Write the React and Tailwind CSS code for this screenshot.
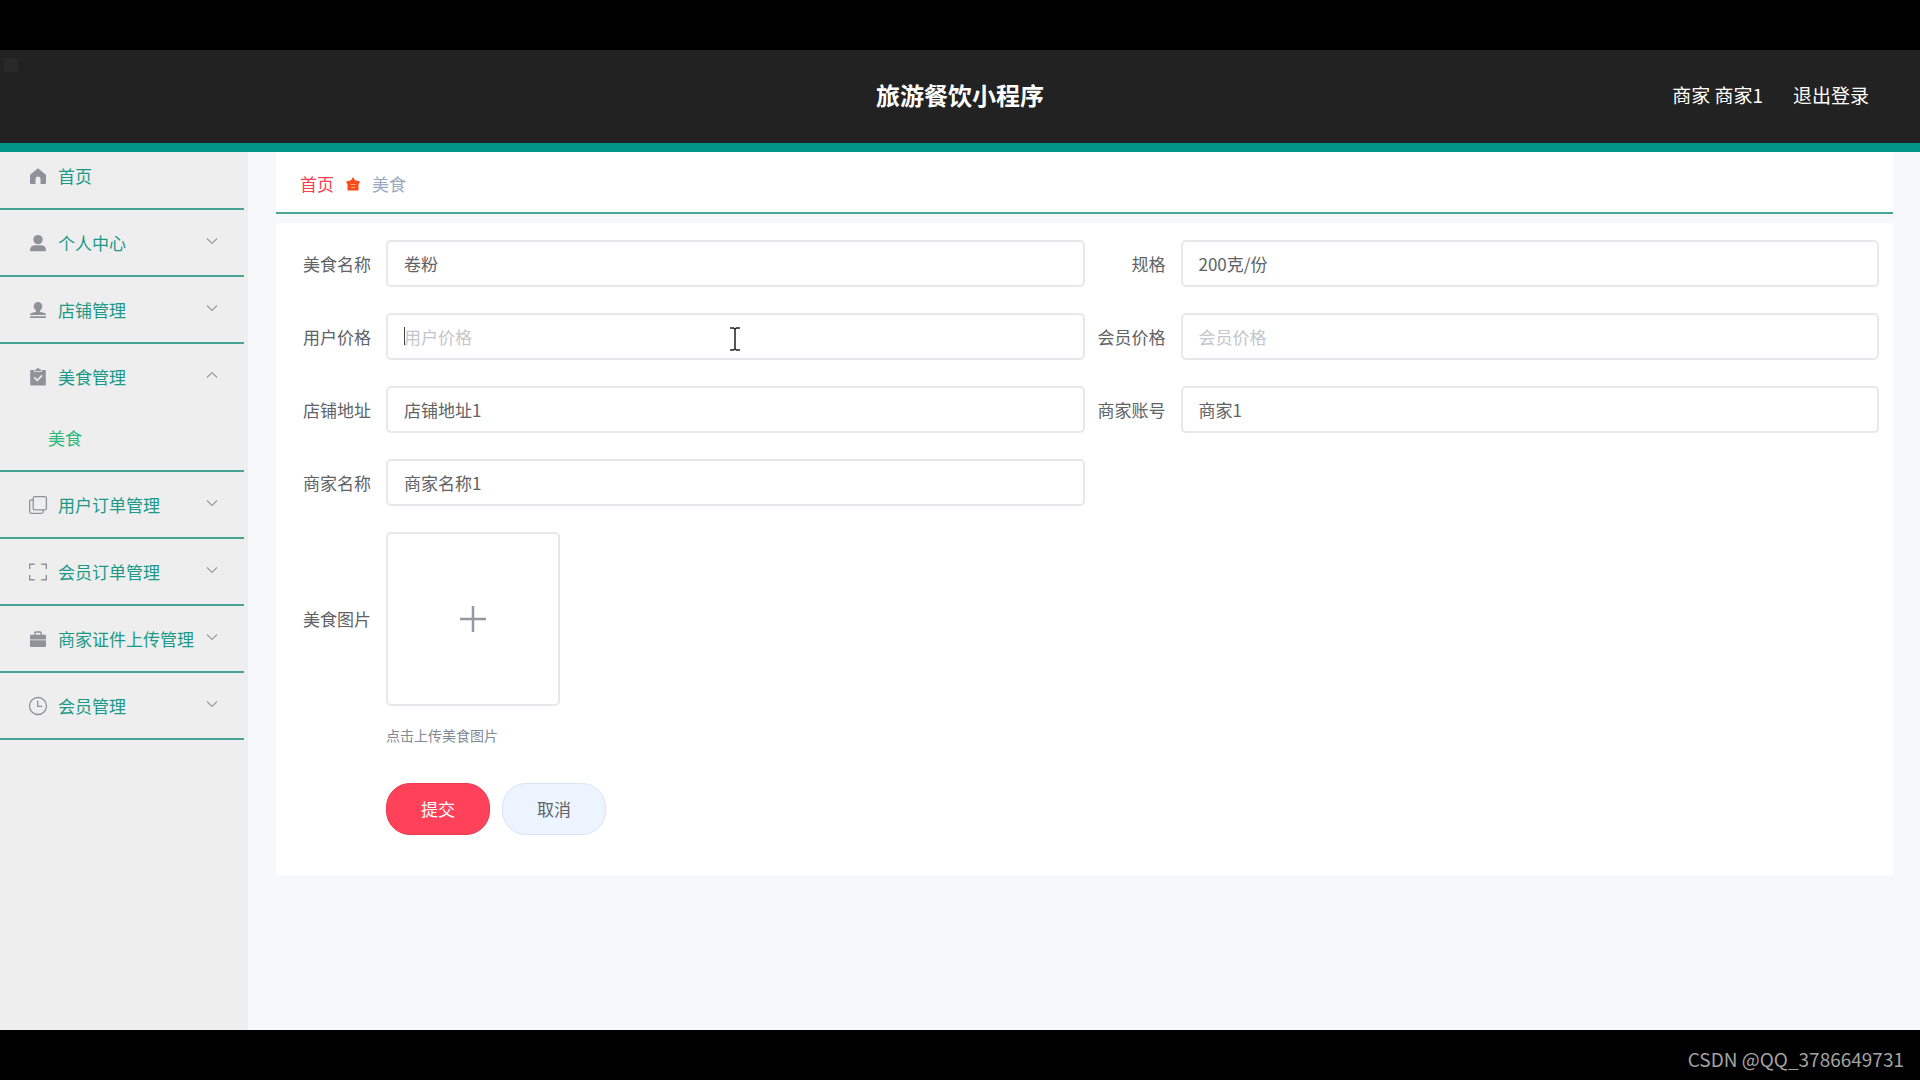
import React, { useState } from 'react'
import clsx from 'clsx'

const Icon = ({ children }) => (
    <svg xmlns="http://www.w3.org/2000/svg" width="20" height="20" viewBox="0 0 20 20" fill="currentColor" className="shrink-0 text-[#8f9399]">
        {children}
    </svg>
)

const HomeIcon = () => (
    <Icon>
        <path d="M10 2.2 17.6 8.6c.4.4.4.6.4 1V17a1 1 0 0 1-1 1h-4.500v-5a2.500 2.500 0 0 0-5 0V18H3a1 1 0 0 1-1-1V9.600c0-.4 0-.6.4-1Z" />
    </Icon>
)

const UserIcon = () => (
    <Icon>
        <circle cx="10" cy="6.600" r="4.700" />
        <path d="M2 17.400c0-3 1.500-5 4.500-5.200h7c3 .2 4.500 2.200 4.500 5.200 0 .6-.4.9-1 .9H3c-.6 0-1-.3-1-.9Z" />
    </Icon>
)

const CustomIcon = () => (
    <Icon>
        <path d="M10 2a4.300 4.300 0 0 1 4.300 4.300c0 1.900-1 3.200-2.300 4.300v1.200l4.500 1.200c1 .3 1.500.9 1.500 2H2c0-1.100.5-1.700 1.500-2L8 11.800v-1.200C6.700 9.500 5.700 8.200 5.700 6.300A4.300 4.300 0 0 1 10 2Z" />
        <rect x="2" y="16.300" width="16" height="1.700" rx=".5" />
    </Icon>
)

const ClaimIcon = () => (
    <Icon>
        <path fillRule="evenodd" d="M3.200 3h3v1.700h7.600V3h3c.6 0 1 .4 1 1v13.500c0 .6-.4 1-1 1H3.200c-.6 0-1-.4-1-1V4c0-.6.400-1 1-1Zm2.500 7.900 3.500 3.500 5.500-5.500-1.100-1.100-4.400 4.400-2.400-2.400Z" />
        <path d="M7.200 2.300h1.500a1.300 1.300 0 0 1 2.600 0h1.500v1.600H7.200Z" />
    </Icon>
)

const CopyIcon = () => (
    <Icon>
        <g fill="none" stroke="currentColor" strokeWidth="1.300">
            <rect x="5.200" y="1.700" width="13.200" height="13.200" rx="1.500" />
            <path d="M5 4.900H3.200c-.9 0-1.500.6-1.500 1.500v10.400c0 .9.600 1.500 1.500 1.500h10.400c.9 0 1.500-.6 1.500-1.500V15" />
        </g>
    </Icon>
)

const FullScreenIcon = () => (
    <Icon>
        <path fill="none" stroke="currentColor" strokeWidth="1.400" d="M1.700 7V2.200h5M13.300 2.200h5V7M18.300 13v4.800h-5M6.700 17.800h-5V13" />
    </Icon>
)

const SuitcaseIcon = () => (
    <Icon>
        <path d="M6.200 5.800V4c0-1 .7-1.700 1.700-1.700h4.200c1 0 1.700.7 1.700 1.700v1.800H17c.6 0 1 .4 1 1v3.700H2V6.800c0-.6.4-1 1-1Zm1.400 0h4.800V4.200c0-.3-.2-.5-.5-.5H8.100c-.3 0-.5.2-.5.5Z" fillRule="evenodd" />
        <path d="M2 11.200h16V17c0 .6-.4 1-1 1H3c-.6 0-1-.4-1-1Z" />
    </Icon>
)

const TimeIcon = () => (
    <Icon>
        <g fill="none" stroke="currentColor" strokeWidth="1.300">
            <circle cx="10" cy="10" r="8.500" />
            <path d="M9.700 4.800v5.600h4.600" />
        </g>
    </Icon>
)

const Chevron = ({ open }) => (
    <svg xmlns="http://www.w3.org/2000/svg" width="12" height="12" viewBox="0 0 12 12" fill="none" stroke="currentColor" strokeWidth="1.200" className={clsx('mb-1 ml-auto shrink-0 text-[#9a9da2]', open && 'rotate-180')}>
        <path d="m1 3.500 5 5 5-5" />
    </svg>
)

const menus = [
    { name: '个人中心', icon: UserIcon },
    { name: '店铺管理', icon: CustomIcon },
    { name: '美食管理', icon: ClaimIcon, children: ['美食'] },
    { name: '用户订单管理', icon: CopyIcon },
    { name: '会员订单管理', icon: FullScreenIcon },
    { name: '商家证件上传管理', icon: SuitcaseIcon },
    { name: '会员管理', icon: TimeIcon },
]

const Sidebar = () => {
    const [opened, setOpened] = useState('美食管理')
    return (
        <nav className="w-62 shrink-0 bg-[#eeeeee] pr-1 text-[17px] text-[#1a9988]">
            <a href="#home" className="flex h-[58px] items-center gap-2.5 border-b-2 border-[#45a394] pb-2 pl-7">
                <HomeIcon />
                首页
            </a>
            {menus.map(({ name, icon: MenuIcon, children }) => (
                <div key={name} className="border-b-2 border-[#45a394]">
                    <button type="button" className="flex h-[65px] w-full items-center gap-2.5 pr-[26px] pl-7" onClick={() => setOpened(opened === name ? '' : name)}>
                        <MenuIcon />
                        {name}
                        <Chevron open={opened === name} />
                    </button>
                    {opened === name && children?.map((child) => (
                        <a key={child} href="#food" className="flex h-[61px] items-center pb-1 pl-12 text-[#2cb87c]">{child}</a>
                    ))}
                </div>
            ))}
        </nav>
    )
}

const Header = () => (
    <header className="relative flex h-[102px] items-center justify-end gap-[30px] border-b-9 border-[#009688] bg-[#222222] pr-[51px] pb-0.5 text-[19px] text-white">
        <span className="absolute top-2 left-1 size-3.5 bg-[#292929]"></span>
        <h1 className="absolute inset-x-0 pb-0.5 text-center text-2xl font-bold">旅游餐饮小程序</h1>
        <span className="relative">商家 商家1</span>
        <a href="#logout" className="relative">退出登录</a>
    </header>
)

const Breadcrumb = () => (
    <div className="flex h-[62px] items-center border-b-2 border-[#4aa596] bg-white pt-1 pl-6 text-[17px]">
        <a href="#home" className="text-[#f8404f]">首页</a>
        <svg xmlns="http://www.w3.org/2000/svg" width="14" height="14" viewBox="0 0 14 14" className="mx-3">
            <path fill="#fb4a1c" d="M7 0 9 3.200l5 1.200-1.500 3.100V13.500H1.500V7.500L0 4.400l5-1.200Z" />
            <path stroke="#ffab7a" strokeWidth="1" d="M4.500 7.500h5M5 10.500h4" />
        </svg>
        <span className="text-[#9aa8c2]">美食</span>
    </div>
)

const Field = ({ id, label, value, focused }) => (
    <div className="flex items-center">
        <label htmlFor={id} className="w-24 shrink-0 pr-[15px] text-right">{label}</label>
        <div className="relative flex-1">
            <input id={id} name={id} type="text" defaultValue={value} placeholder={label} className="h-[47px] w-full rounded-[5px] border-2 border-[#e6e8ec] bg-white px-4 outline-none placeholder:text-[#c3c6cc]" />
            {focused && (
                <>
                    <span className="absolute top-3.5 left-[18px] h-[18px] w-px bg-[#444444]"></span>
                    <svg xmlns="http://www.w3.org/2000/svg" width="12" height="24" viewBox="0 0 12 24" fill="none" stroke="#222222" strokeWidth="1.500" className="absolute top-3.5 left-1/2 -translate-x-1/2">
                        <path d="M1 1h3.500L6 2l1.500-1H11M6 2v20M1 23h3.500L6 22l1.500 1H11" />
                    </svg>
                </>
            )}
        </div>
    </div>
)

const FoodForm = () => (
    <form className="mt-[9px] bg-white px-3.5 pt-[17px] pb-10 text-[17px] text-[#606266]" onSubmit={(e) => e.preventDefault()}>
        <div className="grid grid-cols-2 gap-y-[26px]">
            <Field id="foodName" label="美食名称" value="卷粉" />
            <Field id="spec" label="规格" value="200克/份" />
            <Field id="userPrice" label="用户价格" focused />
            <Field id="memberPrice" label="会员价格" />
            <Field id="address" label="店铺地址" value="店铺地址1" />
            <Field id="account" label="商家账号" value="商家1" />
            <Field id="shopName" label="商家名称" value="商家名称1" />
        </div>
        <div className="mt-[26px] flex items-center">
            <label htmlFor="upload" className="w-24 shrink-0 pr-[15px] text-right">美食图片</label>
            <button id="upload" type="button" className="flex size-[174px] items-center justify-center rounded-[5px] border-2 border-[#e6e8ec]">
                <svg xmlns="http://www.w3.org/2000/svg" width="26" height="26" viewBox="0 0 26 26" stroke="#95999f" strokeWidth="2.500">
                    <path d="M13 0v26M0 13h26" />
                </svg>
            </button>
        </div>
        <div className="pl-24">
            <p className="mt-[17px] text-sm leading-6 text-[#7f8a99]">点击上传美食图片</p>
            <div className="mt-9 flex gap-3">
                <button type="submit" className="h-[52px] w-[104px] rounded-3xl border border-[#e83a50] bg-[#ff4259] text-white">提交</button>
                <button type="button" className="h-[52px] w-[104px] rounded-3xl border border-[#d8e4f0] bg-[#ecf5ff]">取消</button>
            </div>
        </div>
    </form>
)

const App = () => {
    return (
        <div className="flex min-h-screen flex-col bg-black pt-[50px] font-['Noto_Sans_CJK_SC',sans-serif]">
            <Header />
            <div className="flex flex-1 bg-[#f6f8fa]">
                <Sidebar />
                <main className="flex-1 pr-[27px] pl-7">
                    <Breadcrumb />
                    <FoodForm />
                </main>
            </div>
            <footer className="flex h-[50px] items-center justify-end pt-2 pr-4 text-[19px] text-[#a3a3a3]">
                CSDN @QQ_3786649731
            </footer>
        </div>
    )
}

export default App
